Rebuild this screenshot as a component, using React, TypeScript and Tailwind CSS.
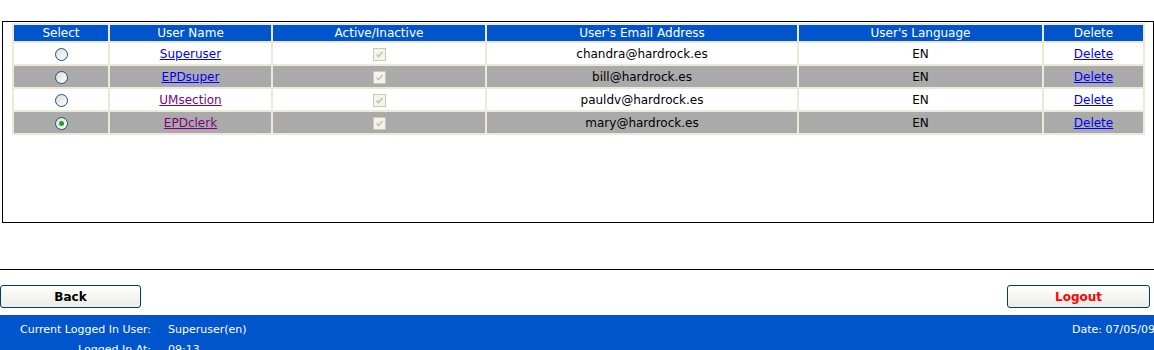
import React from 'react';

const users = [
  { name: 'Superuser', email: 'chandra@hardrock.es', lang: 'EN', visited: false, selected: false },
  { name: 'EPDsuper', email: 'bill@hardrock.es', lang: 'EN', visited: false, selected: false },
  { name: 'UMsection', email: 'pauldv@hardrock.es', lang: 'EN', visited: true, selected: false },
  { name: 'EPDclerk', email: 'mary@hardrock.es', lang: 'EN', visited: true, selected: true },
];

const Radio = ({ checked }: { checked: boolean }) => (
  <span className="inline-flex items-center justify-center w-[13px] h-[13px] rounded-full border border-[#1c5180] bg-gradient-to-br from-[#dcdcd6] to-white align-middle">
    {checked && <span className="w-[5px] h-[5px] rounded-full bg-[#21a121]" />}
  </span>
);

const DisabledCheck = () => (
  <span className="inline-flex items-center justify-center w-[13px] h-[13px] border border-[#cac8bb] bg-[#f5f4ea] align-middle">
    <svg width="9" height="9" viewBox="0 0 9 9">
      <path d="M1.5 4.5 L3.5 6.5 L7.5 2" fill="none" stroke="#c4c2b6" strokeWidth="1.6" />
    </svg>
  </span>
);

const cell = 'border-2 border-[#ece9d8] text-center p-0';

export default function App() {
  return (
    <div className="w-[1154px] h-[350px] overflow-hidden bg-white font-['DejaVu_Sans',sans-serif] text-[12px] text-black">
      <div className="h-[21px]" />
      <div className="ml-[2px] w-[1152px] h-[202px] border border-black pt-[1px] pl-[9px]">
        <table className="w-[1131px] border-collapse table-fixed">
          <colgroup>
            <col className="w-[96px]" />
            <col className="w-[163px]" />
            <col className="w-[214px]" />
            <col className="w-[312px]" />
            <col className="w-[245px]" />
            <col className="w-[101px]" />
          </colgroup>
          <thead>
            <tr className="bg-[#0055cc] text-white h-[18px]">
              {['Select', 'User Name', 'Active/Inactive', "User's Email Address", "User's Language", 'Delete'].map(h => (
                <th key={h} className={`${cell} font-normal leading-[14px]`}>{h}</th>
              ))}
            </tr>
          </thead>
          <tbody>
            {users.map((u, i) => (
              <tr key={u.name} className={`h-[23px] ${i % 2 === 1 ? 'bg-[#aaaaaa]' : 'bg-white'}`}>
                <td className={cell}><Radio checked={u.selected} /></td>
                <td className={cell}>
                  <a href="#" className={`underline ${u.visited ? 'text-[#800080]' : 'text-[#0000ff]'}`}>{u.name}</a>
                </td>
                <td className={cell}><DisabledCheck /></td>
                <td className={cell}>{u.email}</td>
                <td className={cell}>{u.lang}</td>
                <td className={cell}>
                  <a href="#" className="underline text-[#0000ff]">Delete</a>
                </td>
              </tr>
            ))}
          </tbody>
        </table>
      </div>
      <div className="h-[46px]" />
      <div className="border-t border-black" />
      <div className="flex justify-between items-start pt-[15px] h-[45px]">
        <button className="w-[141px] h-[23px] rounded-[3px] border border-[#003c74] bg-gradient-to-b from-white to-[#ecebe4] font-bold text-[12px] text-black">
          Back
        </button>
        <button className="mr-[4px] w-[143px] h-[23px] rounded-[3px] border border-[#003c74] bg-gradient-to-b from-white to-[#ecebe4] font-bold text-[12px] text-[#ff0000]">
          Logout
        </button>
      </div>
      <div className="bg-[#0055cc] text-white text-[11px] h-[40px] pt-[7px] flex">
        <div className="w-[1072px] shrink-0 flex flex-col gap-[3px]">
          <div className="flex">
            <span className="w-[151px] text-right whitespace-nowrap">Current Logged In User:</span>
            <span className="ml-[17px]">Superuser(en)</span>
          </div>
          <div className="flex">
            <span className="w-[151px] text-right">Logged In At:</span>
            <span className="ml-[17px]">09:13</span>
          </div>
        </div>
        <div className="shrink-0 whitespace-nowrap">Date: 07/05/09</div>
      </div>
    </div>
  );
}
